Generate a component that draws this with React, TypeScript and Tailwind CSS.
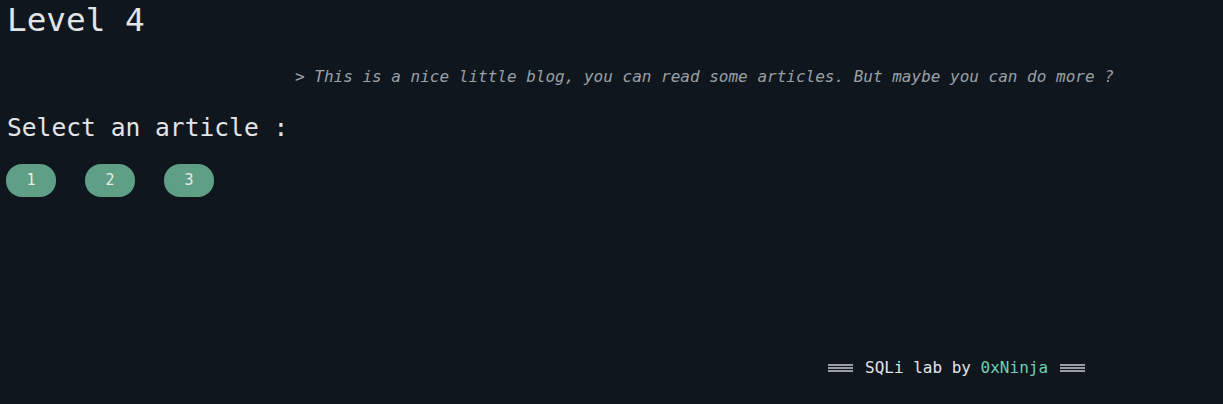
import React from "react";

const Bars = () => (
  <span className="inline-flex flex-col gap-[1px] w-[25px] mx-[12px]">
    <span className="block h-[2px] bg-[#9a9ea3]" />
    <span className="block h-[2px] bg-[#9a9ea3]" />
    <span className="block h-[2px] bg-[#9a9ea3]" />
  </span>
);

export default function App() {
  return (
    <div
      className="min-h-[404px] w-full bg-[#0f161e] text-[#e2e4e6] flex flex-col"
      style={{ fontFamily: '"DejaVu Sans Mono", "Liberation Mono", monospace' }}
    >
      <h1 className="text-[32.7px] leading-[40px] pl-[7px] pt-0">Level 4</h1>
      <p className="text-[16px] italic text-[#9aa0a6] pl-[295px] mt-[25px] leading-[24px]">
        &gt; This is a nice little blog, you can read some articles. But maybe you can do more ?
      </p>
      <h2 className="text-[24.6px] pl-[7px] mt-[24px] leading-[30px]">Select an article :</h2>
      <div className="flex gap-[29px] pl-[6px] mt-[21px]">
        {["1", "2", "3"].map((n) => (
          <button
            key={n}
            className="w-[50px] h-[33px] rounded-[16px] bg-[#5f9f86] text-[#e6ece9] text-[15px] flex items-center justify-center"
          >
            {n}
          </button>
        ))}
      </div>
      <div className="mt-auto mb-[26px] flex items-center pl-[816px] text-[16px] leading-[20px]">
        <Bars />
        <span>
          SQLi lab by <span className="text-[#6fd0ab]">0xNinja</span>
        </span>
        <Bars />
      </div>
    </div>
  );
}
